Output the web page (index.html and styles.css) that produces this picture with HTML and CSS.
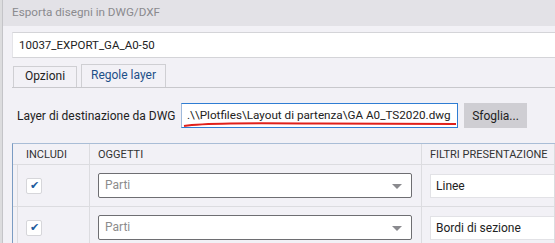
FILE: index.html
```html
<!DOCTYPE html>
<html lang="it">
<head>
  <meta charset="UTF-8">
  <title>Esporta disegni in DWG/DXF</title>
  <link rel="stylesheet" href="styles.css">
</head>
<body>
  <div class="screen">
    <div class="edge"></div>

    <div class="dialog">
      <div class="titlebar">Esporta disegni in DWG/DXF</div>

      <div class="content">
        <div class="name-field">10037_EXPORT_GA_A0-50</div>

        <!-- Tabs -->
        <div class="tabs">
          <div class="tab">Opzioni</div>
          <div class="tab active">Regole layer</div>
        </div>

        <div class="layer-row">
          <label class="layer-label">Layer di destinazione da DWG</label>
          <div class="path-field">
            <span>.\\Plotfiles\Layout di partenza\GA A0_TS2020.dwg</span>
            <svg class="squiggle" width="274" height="5" viewBox="0 0 274 5">
              <path d="M1 4 C 20 1, 60 1, 137 1.5 S 250 2, 273 2" fill="none" stroke="#e0201b" stroke-width="2"/>
            </svg>
          </div>
          <button class="btn">Sfoglia...</button>
        </div>

        <!-- Layer rules table -->
        <div class="rules">
          <div class="cell head stub"></div>
          <div class="cell head">INCLUDI</div>
          <div class="cell head">OGGETTI</div>
          <div class="cell head">FILTRI PRESENTAZIONE</div>

          <div class="cell stub"></div>
          <div class="cell"><span class="check">✔</span></div>
          <div class="cell"><div class="select">Parti<span class="arrow"></span></div></div>
          <div class="cell"><div class="filter">Linee</div></div>

          <div class="cell stub"></div>
          <div class="cell"><span class="check">✔</span></div>
          <div class="cell"><div class="select">Parti<span class="arrow"></span></div></div>
          <div class="cell"><div class="filter">Bordi di sezione</div></div>
        </div>
      </div>
    </div>
  </div>
</body>
</html>
```

FILE: styles.css
```css
* {
  margin: 0;
  padding: 0;
  box-sizing: border-box;
}
body {
  font-family: Roboto, "Noto Sans", sans-serif;
  font-size: 12px;
  color: #222;
  background-color: #f2f1f6;
  overflow: hidden;
  white-space: nowrap;
}
.screen {
  display: flex;
  width: 555px;
  height: 243px;
}
.edge {
  width: 3px;
  background-color: #dcdcde;
  border-right: 1px solid #c4c4c8;
}
.dialog {
  flex: 1;
  min-width: 0;
}
.titlebar {
  height: 26px;
  line-height: 25px;
  padding-left: 9px;
  font-size: 11.7px;
  color: #8a8a8e;
  background-color: #e3e2e7;
}
.content {
  padding: 6px 0 0 9px;
}
.name-field {
  height: 26px;
  line-height: 24px;
  padding-left: 6px;
  font-size: 11.5px;
  background-color: #fff;
  border-top: 1px solid #d4d4d8;
  border-bottom: 1px solid #d4d4d8;
  border-left: 1px solid #e4e4e8;
}
.tabs {
  display: flex;
  align-items: flex-end;
  gap: 4px;
  height: 23px;
  margin-top: 7px;
  padding-left: 1px;
  border-bottom: 1px solid #c8c8cc;
}
.tab {
  width: 64px;
  height: 21px;
  line-height: 19px;
  text-align: center;
  border: 1px solid #cfcfd3;
  border-bottom: none;
}
.tab.active {
  width: 85px;
  height: 23px;
  line-height: 21px;
  color: #1c4f88;
}
.layer-row {
  display: flex;
  align-items: center;
  height: 25px;
  margin-top: 15px;
  padding-left: 5px;
}
.layer-label {
  flex-shrink: 0;
  width: 164px;
}
.path-field {
  position: relative;
  flex-shrink: 0;
  width: 277px;
  height: 25px;
  line-height: 23px;
  padding-left: 5px;
  font-size: 11.7px;
  background-color: #fff;
  border: 1px solid #2f7dd3;
  border-left-color: #9fb9da;
  overflow: hidden;
}
.squiggle {
  position: absolute;
  left: 1px;
  bottom: 0;
}
.btn {
  width: 63px;
  height: 25px;
  margin-left: 6px;
  font-family: inherit;
  font-size: 12px;
  color: #222;
  background-color: #cfced3;
  border: none;
}
.rules {
  display: grid;
  grid-template-columns: 5px 72px 332px 1fr;
  grid-template-rows: 21px 42px 42px;
  margin-top: 15px;
  border-top: 1px solid #a9bdd6;
  border-left: 1px solid #7b9cc3;
}
.cell {
  display: flex;
  align-items: center;
  padding-left: 8px;
  border-right: 1px solid #dcdce0;
  border-bottom: 1px solid #dcdce0;
}
.cell.stub {
  padding: 0;
}
.cell.head {
  padding-left: 8px;
  font-size: 11px;
  color: #333;
}
.cell.head.stub {
  border-right: none;
  padding: 0;
}
.check {
  display: flex;
  align-items: center;
  justify-content: center;
  width: 16px;
  height: 16px;
  font-size: 11px;
  color: #1d5c9e;
  background-color: #fff;
  border: 1px solid #d6d6da;
  border-radius: 2px;
}
.select {
  position: relative;
  width: 314px;
  height: 25px;
  line-height: 23px;
  padding-left: 6px;
  color: #8c8c8c;
  background-color: #fff;
  border: 1px solid #6e6e72;
  border-radius: 2px;
}
.arrow {
  position: absolute;
  right: 9px;
  top: 10px;
  border-left: 5px solid transparent;
  border-right: 5px solid transparent;
  border-top: 5px solid #8a8a8e;
}
.filter {
  flex: 1;
  height: 24px;
  line-height: 22px;
  padding-left: 5px;
  background-color: #fff;
  border: 1px solid #e2e2e6;
  border-right: none;
}
```
